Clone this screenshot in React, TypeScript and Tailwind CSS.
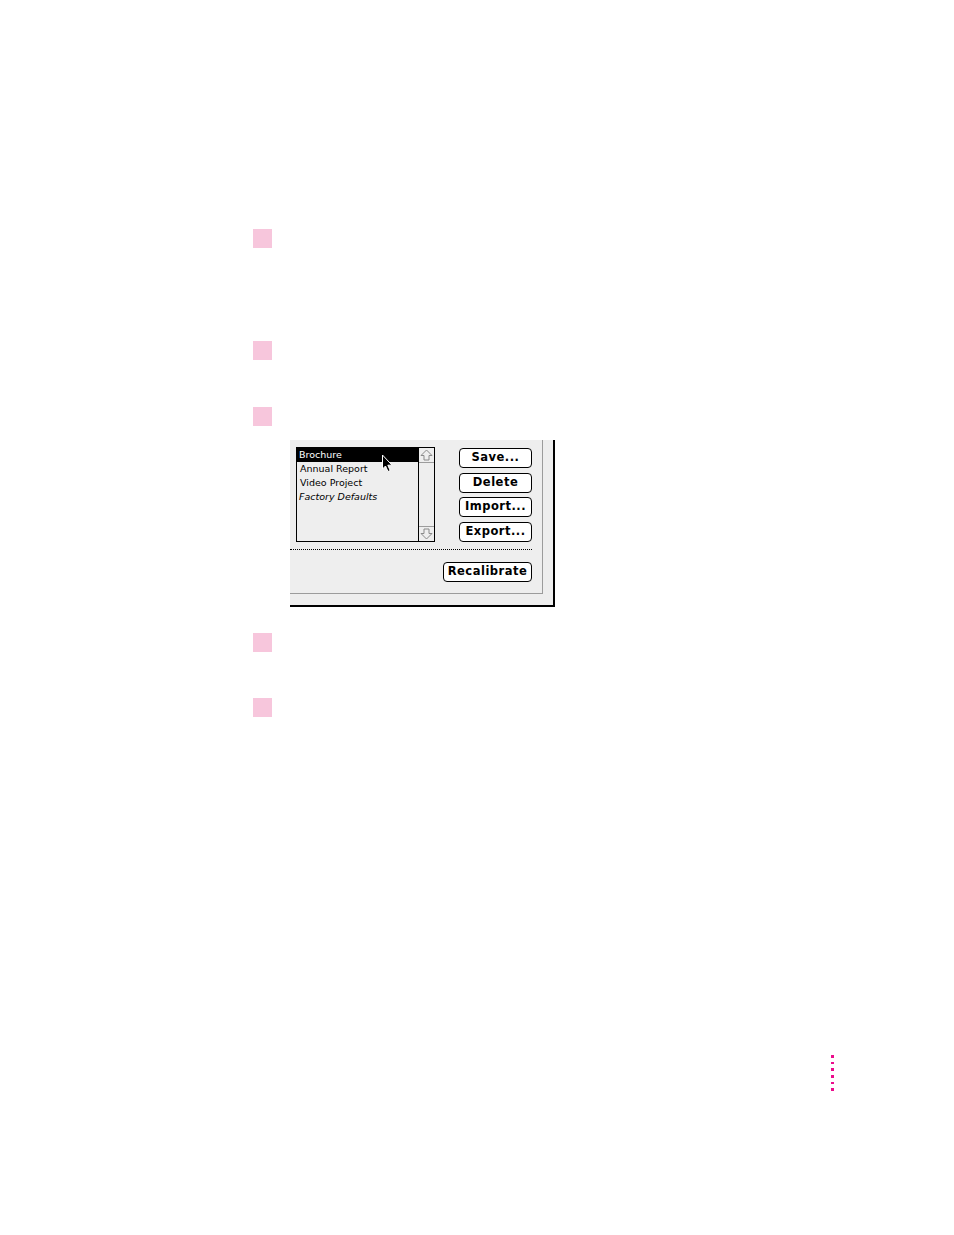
import React from 'react';

const chicago = { fontFamily: '"DejaVu Sans", "Liberation Sans", sans-serif' };

function ArrowUp() {
  return (
    <svg width="13" height="12" viewBox="0 0 13 12" className="block">
      <path d="M6.5 1 L12 6.5 H9 V11 H4 V6.5 H1 Z" fill="none" stroke="#8a8a8a" strokeWidth="1" />
    </svg>
  );
}

function ArrowDown() {
  return (
    <svg width="13" height="12" viewBox="0 0 13 12" className="block">
      <path d="M6.5 11 L12 5.5 H9 V1 H4 V5.5 H1 Z" fill="none" stroke="#8a8a8a" strokeWidth="1" />
    </svg>
  );
}

function Cursor() {
  return (
    <svg width="13" height="19" viewBox="0 0 13 19" className="absolute left-[84px] top-[6px]">
      <path d="M1.5 1 V15 L4.5 12 L7 17.5 L9.2 16.5 L6.8 11.2 H11 Z" fill="#000" stroke="#fff" strokeWidth="1" strokeLinejoin="miter" />
    </svg>
  );
}

function MacButton({ label, w }: { label: string; w: string }) {
  return (
    <div
      className={`${w} flex h-[20px] items-center justify-center rounded-[4px] border border-black bg-white text-[11.5px] font-bold tracking-[0.5px] text-black`}
      style={chicago}
    >
      {label}
    </div>
  );
}

const items = ['Brochure', 'Annual Report', 'Video Project', 'Factory Defaults'];

function Dialog() {
  return (
    <div className="ml-[37px] h-[167px] w-[265px] border-r-2 border-b-2 border-black bg-[#eeeeee]">
      <div className="flex h-[154px] w-[253px] flex-col border-r border-b border-[#9c9c9c] pt-[7px]">
        <div className="flex pl-[6px]">
          <div className="flex h-[95px] w-[139px] border border-black bg-[#eeeeee]">
            <div className="relative flex-1 text-[9.5px] leading-[14px] text-black" style={{ fontFamily: '"DejaVu Sans", sans-serif' }}>
              {items.map((it, i) => (
                <div
                  key={it}
                  className={
                    i === 0
                      ? 'h-[14px] bg-black pl-[2px] text-white'
                      : i === 3
                        ? 'h-[14px] pl-[2px] italic'
                        : 'h-[14px] pl-[3px]'
                  }
                >
                  {it}
                </div>
              ))}
              <Cursor />
            </div>
            <div className="flex w-[16px] flex-col justify-between border-l border-black">
              <div className="flex h-[15px] items-center justify-center border-b border-[#9c9c9c]">
                <ArrowUp />
              </div>
              <div className="flex h-[15px] items-center justify-center border-t border-[#9c9c9c]">
                <ArrowDown />
              </div>
            </div>
          </div>
          <div className="ml-[24px] mt-[1px] flex flex-col gap-[4.5px]">
            <MacButton label="Save..." w="w-[73px]" />
            <MacButton label="Delete" w="w-[73px]" />
            <MacButton label="Import..." w="w-[73px]" />
            <MacButton label="Export..." w="w-[73px]" />
          </div>
        </div>
        <div className="mt-[7px] mr-[10px] border-t border-dotted border-black" />
        <div className="mt-[12px] mr-[10px] flex justify-end">
          <MacButton label="Recalibrate" w="w-[89px]" />
        </div>
      </div>
    </div>
  );
}

function Step({ mt }: { mt: string }) {
  return <div className={`${mt} h-[19px] w-[19px] bg-[#f7c6dc]`} />;
}

export default function App() {
  return (
    <div className="relative h-[1235px] w-[954px] bg-white">
      <div className="flex flex-col pl-[253px] pt-[229px]">
        <Step mt="mt-0" />
        <Step mt="mt-[93px]" />
        <Step mt="mt-[47px]" />
        <div className="mt-[14px]">
          <Dialog />
        </div>
        <Step mt="mt-[26px]" />
        <Step mt="mt-[46px]" />
      </div>
      <div className="ml-[831px] mt-[338px] flex w-[3px] flex-col gap-[4px]">
        {[0, 1, 2, 3, 4, 5].map((i) => (
          <div key={i} className="h-[2.7px] w-[3px] bg-[#ec0c8c]" />
        ))}
      </div>
    </div>
  );
}
